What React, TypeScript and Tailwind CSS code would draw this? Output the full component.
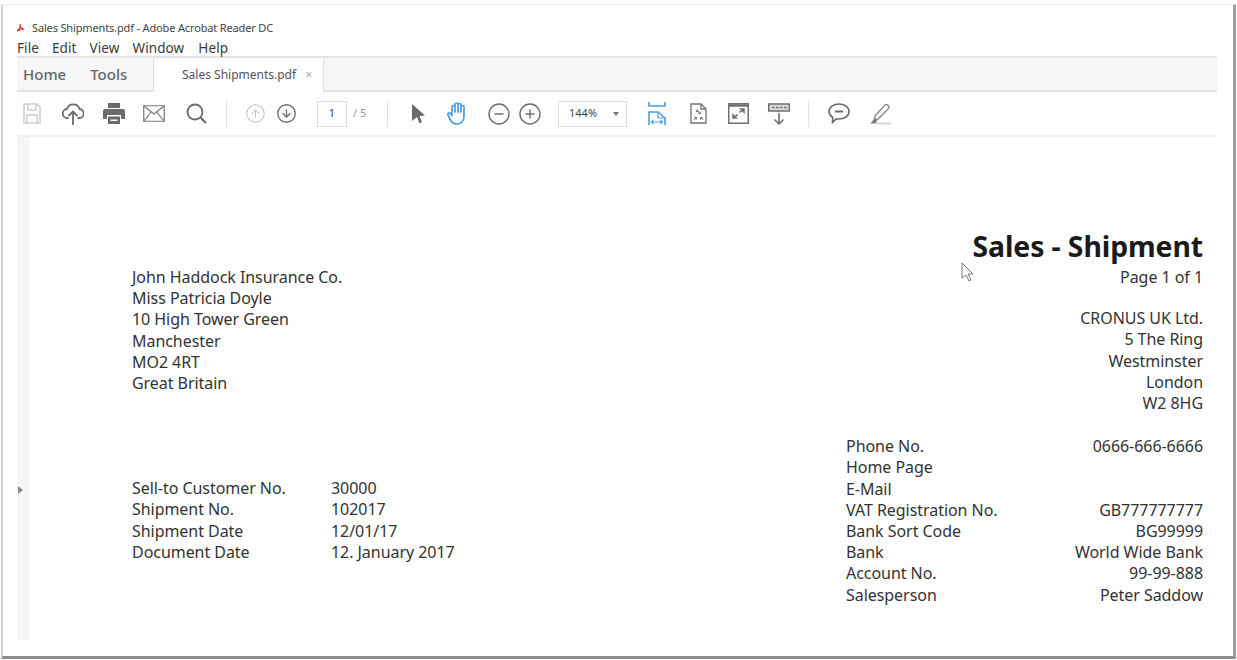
import type { ReactNode } from 'react';
import { CircleMinus, CirclePlus, CircleArrowUp, CircleArrowDown } from 'lucide-react';

const address = ['John Haddock Insurance Co.', 'Miss Patricia Doyle', '10 High Tower Green', 'Manchester', 'MO2 4RT', 'Great Britain'];
const company = ['CRONUS UK Ltd.', '5 The Ring', 'Westminster', 'London', 'W2 8HG'];
const meta = [
  ['Sell-to Customer No.', '30000'],
  ['Shipment No.', '102017'],
  ['Shipment Date', '12/01/17'],
  ['Document Date', '12. January 2017'],
];
const details = [
  ['Phone No.', '0666-666-6666'],
  ['Home Page', ''],
  ['E-Mail', ''],
  ['VAT Registration No.', 'GB777777777'],
  ['Bank Sort Code', 'BG99999'],
  ['Bank', 'World Wide Bank'],
  ['Account No.', '99-99-888'],
  ['Salesperson', 'Peter Saddow'],
];

function Sep({ className }: { className: string }) {
  return <div className={`h-[26px] w-px bg-[#e2e2e2] ${className}`} />;
}

function Tool({ className, children }: { className: string; children: ReactNode }) {
  return <div className={`flex h-6 shrink-0 items-center justify-center ${className}`}>{children}</div>;
}

export default function App() {
  return (
    <div className="relative h-[660px] w-[1237px] overflow-hidden bg-white font-['Noto_Sans',sans-serif] text-[#2b2b2b]">
      <div className="ml-[1px] mt-[4px] h-[655px] w-[1235px] border-b-[3px] border-l-2 border-r-[3px] border-t border-b-[#8d8d8d] border-l-[#d4d4d4] border-r-[#a0a0a0] border-t-[#f0f0f0] pl-[14px] pr-[16px]">
        {/* Title + menu */}
        <div className="mt-[8px] flex h-[16px] items-center pt-[14px] text-[11px] tracking-[-0.15px] text-[#444]">
          <svg width="7" height="8" viewBox="0 0 7 8" className="mr-[8px] shrink-0">
            <path d="M0 7 C3 5 4 3 3 0 C3 3 5 5 7 5 C4 5 2 6 0 7Z" fill="none" stroke="#d2362c" strokeWidth="1.2" />
          </svg>
          Sales Shipments.pdf - Adobe Acrobat Reader DC
        </div>
        <div className="mt-[11px] flex h-[16px] items-center gap-[13px] text-[13.5px] tracking-[0.1px] text-[#3a3a3a]">
          <span>File</span>
          <span>Edit</span>
          <span>View</span>
          <span>Window</span>
          <span className="ml-[1px]">Help</span>
        </div>

        {/* Tabs */}
        <div className="flex h-[36px] border-y-2 border-y-[#e4e4e4] bg-[#f6f6f6] text-[#666]">
          <div className="flex w-[137px] items-center border-r border-r-[#e0e0e0] pl-[6px] text-[15px] font-medium">
            <span>Home</span>
            <span className="ml-[24px]">Tools</span>
          </div>
          <div className="-mb-[2px] flex w-[170px] items-center border-r border-r-[#e0e0e0] bg-white pl-[28px] text-[12px] text-[#555]">
            <span>Sales Shipments.pdf</span>
            <span className="ml-[9px] text-[12px] text-[#aaa]">×</span>
          </div>
        </div>

        {/* Toolbar */}
        <div className="flex h-[45px] items-center border-b-2 border-b-[#f0f0f0] text-[#6b6b6b]">
          <Tool className="ml-[5px] w-[20px]">
            <svg width="18" height="21" viewBox="0 0 18 21" fill="none" stroke="#cfcfcf" strokeWidth="1.6">
              <path d="M1 1h13l3 3v16H1Z" />
              <path d="M5 1v6h8V1M4 20v-8h10v8" />
            </svg>
          </Tool>
          <Tool className="ml-[20px] w-[22px]">
            <svg width="22" height="24" viewBox="0 0 22 24" fill="none" stroke="#6b6b6b" strokeWidth="1.8">
              <path d="M6.500 16H5.500a4.500 4.500 0 0 1-.5-9 6.500 6.500 0 0 1 12.500 0 4.500 4.500 0 0 1-.5 9h-1.500" />
              <path d="M11 23V10M6.500 14 11 9.500l4.500 4.500" />
            </svg>
          </Tool>
          <Tool className="ml-[19px] w-[22px]">
            <svg width="22" height="22" viewBox="0 0 22 22" fill="#6b6b6b">
              <path d="M5 0h12v5H5Z" />
              <path d="M2 6h18a2 2 0 0 1 2 2v8h-4v-4H4v4H0V8a2 2 0 0 1 2-2Z" />
              <path d="M5 13.500h12V21H5Zm2.500 3v1.500h7v-1.500Z" fillRule="evenodd" />
            </svg>
          </Tool>
          <Tool className="ml-[18px] w-[22px]">
            <svg width="22" height="17" viewBox="0 0 22 17" fill="none" stroke="#777" strokeWidth="1.2">
              <path d="M.75.75h20.500v15.500H.75Z" />
              <path d="m1 1 10 8 10-8M1 16l7.500-9.500M21 16l-7.500-9.500" />
            </svg>
          </Tool>
          <Tool className="ml-[21px] w-[21px]">
            <svg width="21" height="21" viewBox="0 0 21 21" fill="none" stroke="#6b6b6b" strokeWidth="1.800">
              <circle cx="9" cy="9" r="7.500" />
              <path d="m14 14 6 6" strokeWidth="2.200" />
            </svg>
          </Tool>
          <Sep className="ml-[19px]" />
          <Tool className="ml-[18px] w-[21px]">
            <CircleArrowUp size={21} strokeWidth={1.2} className="text-[#c4c4c4]" />
          </Tool>
          <Tool className="ml-[10px] w-[21px]">
            <CircleArrowDown size={21} strokeWidth={1.5} />
          </Tool>
          <div className="ml-[20px] flex h-[26px] w-[30px] items-center justify-center border border-[#dcdcdc] text-[11px] text-[#444]">1</div>
          <span className="ml-[6px] w-[14px] text-[11px] text-[#999]">/ 5</span>
          <Sep className="ml-[20px]" />
          <Tool className="ml-[22px] w-[16px]">
            <svg width="14" height="20" viewBox="0 0 14 20" fill="#6b6b6b">
              <path d="M1 0 14 11.500 8.500 12l2.500 6-2.500 1.500L6 13l-5 4Z" />
            </svg>
          </Tool>
          <Tool className="ml-[20px] w-[24px]">
            <svg width="22" height="24" viewBox="0 0 22 24" fill="none" stroke="#4a9fdc" strokeWidth="1.700" strokeLinecap="round" strokeLinejoin="round">
              <path d="M5 12V5a1.500 1.500 0 0 1 3 0v5M8 10V2.500a1.500 1.500 0 0 1 3 0V10M11 10V3a1.500 1.500 0 0 1 3 0v7M14 10V5a1.500 1.500 0 0 1 3 0v9c0 5-3 8-7 8-3 0-5-1-6.500-4L1 13c-.7-1.500 1-2.800 2.300-1.700L5 13.500" />
            </svg>
          </Tool>
          <Tool className="ml-[18px] w-[21px]">
            <CircleMinus size={24} strokeWidth={1.4} className="shrink-0" />
          </Tool>
          <Tool className="ml-[10px] w-[21px]">
            <CirclePlus size={24} strokeWidth={1.4} className="shrink-0" />
          </Tool>
          <div className="ml-[18px] flex h-[26px] w-[69px] items-center justify-between border border-[#dcdcdc] pl-[10px] pr-[7px] text-[11px] text-[#444]">
            <span>144%</span>
            <div className="h-0 w-0 border-x-[3.5px] border-t-[4px] border-x-transparent border-t-[#777]" />
          </div>
          <Tool className="ml-[21px] w-[18px]">
            <svg width="18" height="23" viewBox="0 0 18 23" fill="none" stroke="#4a9fdc" strokeWidth="1.600">
              <path d="M1 0v4h16V0" />
              <path d="M1 23V10h9l7 6v7" />
              <path d="M10 10v6h7" strokeWidth="1.200" />
              <path d="M3.500 20h11M5.500 18l-2 2 2 2M12.500 18l2 2-2 2" strokeWidth="1.200" />
            </svg>
          </Tool>
          <Tool className="ml-[24px] w-[17px]">
            <svg width="17" height="21" viewBox="0 0 17 21" fill="none" stroke="#707070" strokeWidth="1.300">
              <path d="M1 1h10l5 5v14H1Z" />
              <path d="M11 1v5h5" />
              <path d="M6 6.500 8 8.500M7.800 6.500v2h-2M11 8.500l-2 2M9 8.500v2h2M4 17l2.500-2.500M4.500 14.500h2v2M13 17l-2.500-2.500M12.500 14.500h-2v2" strokeWidth="1" />
            </svg>
          </Tool>
          <Tool className="ml-[21px] w-[21px]">
            <svg width="21" height="21" viewBox="0 0 21 21" fill="none" stroke="#707070">
              <path d="M.75.75h19.500v19.500H.75Z" strokeWidth="1.500" />
              <path d="M.75 2.500h19.500" strokeWidth="2.500" />
              <path d="M11.500 9.500l3-3M6.500 14.500l3-3" strokeWidth="1.600" />
              <path d="M11.500 5.500h5v5ZM4.500 10.500v5h5Z" fill="#707070" strokeWidth="0.500" />
            </svg>
          </Tool>
          <Tool className="ml-[19px] w-[22px]">
            <svg width="22" height="22" viewBox="0 0 22 22" fill="none" stroke="#707070">
              <path d="M.75 1h20.500v7H.75Z" fill="#d9d9d9" strokeWidth="1.500" />
              <path d="M4 4.500h2.500M8 4.500h2.500M12 4.500h2.500M16 4.500h2.500" strokeWidth="1.500" />
              <path d="M11 10v11M6.500 16.500l4.500 4.500 4.500-4.500" strokeWidth="1.600" />
            </svg>
          </Tool>
          <Sep className="ml-[18px]" />
          <Tool className="ml-[19px] w-[22px]">
            <svg width="22" height="21" viewBox="0 0 22 21" fill="none" stroke="#6b6b6b" strokeWidth="1.600">
              <path d="M11 1c5.500 0 10 3 10 7.500S16.500 16 11 16c-1 0-1.800-.1-2.700-.3L4.500 19.500l.2-5C2.500 13 1 11 1 8.500 1 4 5.500 1 11 1Z" />
              <path d="M7 8.500h8" strokeWidth="2" />
            </svg>
          </Tool>
          <Tool className="ml-[19px] w-[22px]">
            <svg width="22" height="22" viewBox="0 0 22 22" fill="none" stroke="#8a8a8a" strokeWidth="1.400">
              <path d="M6 13 16 2c2-1.500 5 1 3.500 3.500L9 16l-3.500.5Z" />
              <path d="M5 16 1.500 20.500h5l2-3.500Z" fill="#777" stroke="none" />
              <path d="M7 20.500h15" stroke="#dcdcdc" strokeWidth="2.500" />
            </svg>
          </Tool>
        </div>

        {/* Document */}
        <div className="flex h-[503px]">
          <div className="w-[13px] shrink-0 bg-[#f6f6f6] pl-[1px] pt-[349px]">
            <div className="h-0 w-0 border-y-[4px] border-l-[5px] border-y-transparent border-l-[#8a8a8a]" />
          </div>
          <div className="flex flex-1 justify-between pl-[102px] pr-[14px] text-[16px] leading-[21.2px] tracking-[-0.05px] text-[#333]">
            <div className="pt-[130px]">
              {address.map(line => <div key={line}>{line}</div>)}
              <div className="mt-[84px]">
                {meta.map(([label, value]) => (
                  <div key={label} className="flex">
                    <span className="w-[199px] shrink-0">{label}</span>
                    <span>{value}</span>
                  </div>
                ))}
              </div>
            </div>
            <div className="w-[357px] pt-[93px]">
              <div className="text-right text-[28.4px] font-bold leading-[32px] tracking-[-0.1px] text-[#1a1a1a]">Sales - Shipment</div>
              <div className="mt-[5px] text-right">Page 1 of 1</div>
              <div className="mt-[20px] text-right">
                {company.map(line => <div key={line}>{line}</div>)}
              </div>
              <div className="mt-[22px]">
                {details.map(([label, value]) => (
                  <div key={label} className="flex h-[21.2px] justify-between">
                    <span>{label}</span>
                    <span>{value}</span>
                  </div>
                ))}
              </div>
            </div>
          </div>
        </div>
      </div>

      {/* Mouse pointer over the page */}
      <svg width="14" height="21" viewBox="0 0 14 21" className="absolute left-[961px] top-[262px]" fill="white" stroke="#777" strokeWidth="1">
        <path d="M1 1v15l4-3 3 6 2-1-3-6h5Z" />
      </svg>
    </div>
  );
}
